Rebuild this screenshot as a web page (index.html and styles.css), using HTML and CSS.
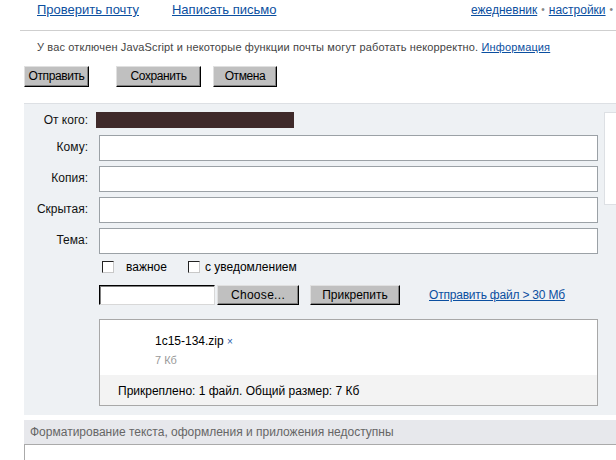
FILE: index.html
```html
<!DOCTYPE html>
<html>
<head>
<meta charset="utf-8">
<link rel="stylesheet" href="styles.css">
</head>
<body>
<div class="page">
  <div class="topnav">
    <div class="main-links">
      <a href="#">Проверить почту</a>
      <a href="#">Написать письмо</a>
    </div>
    <div class="side-links">
      <a href="#">ежедневник</a><span class="dot">•</span><a href="#">настройки</a><span class="dot">•</span><a href="#">помощь</a>
    </div>
  </div>
  <div class="notice">У вас отключен JavaScript и некоторые функции почты могут работать некорректно. <a href="#">Информация</a></div>
  <div class="actions">
    <span class="btn send">Отправить</span>
    <span class="btn save">Сохранить</span>
    <span class="btn cancel">Отмена</span>
  </div>
  <div class="compose">
    <div class="form">
      <div class="row from-row">
        <span class="label">От кого:</span>
        <span class="from-bar"></span>
      </div>
      <div class="row field-row"><span class="label">Кому:</span><span class="input"></span></div>
      <div class="row field-row"><span class="label">Копия:</span><span class="input"></span></div>
      <div class="row field-row"><span class="label">Скрытая:</span><span class="input"></span></div>
      <div class="row field-row"><span class="label">Тема:</span><span class="input"></span></div>
      <div class="checks">
        <span class="check"></span><span class="check-label">важное</span>
        <span class="check"></span><span class="check-label short">с уведомлением</span>
      </div>
      <div class="file-row">
        <span class="file-text"></span>
        <span class="btn choose">Choose...</span>
        <span class="btn attach">Прикрепить</span>
        <a href="#" class="big-file">Отправить файл &gt; 30 Мб</a>
      </div>
      <div class="attached">
        <div class="file-item">
          <div class="file-name">1c15-134.zip <span class="remove">×</span></div>
          <div class="file-size">7 Кб</div>
        </div>
        <div class="summary">Прикреплено: 1 файл. Общий размер: 7 Кб</div>
      </div>
    </div>
    <div class="sidebar"><div class="side-box"></div></div>
  </div>
  <div class="format-bar">Форматирование текста, оформления и приложения недоступны</div>
  <div class="editor"></div>
</div>
</body>
</html>
```
FILE: styles.css
```css
html, body {
  margin: 0;
  padding: 0;
  background: #fff;
  overflow: hidden;
}
body {
  width: 616px;
  height: 460px;
  font-family: "Liberation Sans", Arial, sans-serif;
  color: #000;
}
a {
  color: #0b4fa0;
  text-decoration: underline;
}
.page {
  width: 616px;
  overflow: hidden;
}
.topnav {
  margin-left: 20px;
  padding-left: 17px;
  height: 30px;
  border-bottom: 1px solid #cfcfcf;
  display: flex;
  font-size: 13px;
  line-height: 20px;
  overflow: hidden;
}
.main-links {
  display: flex;
  gap: 33px;
  width: 434px;
  flex-shrink: 0;
}
.side-links {
  display: flex;
  align-items: flex-start;
  font-size: 12px;
  white-space: nowrap;
}
.dot {
  color: #888;
  font-size: 10px;
  padding: 0 4px;
}
.notice {
  padding: 9px 0 0 37px;
  font-size: 11px;
  letter-spacing: 0.14px;
  line-height: 15px;
  color: #444;
  height: 26px;
}
.actions {
  margin-left: 24px;
  display: flex;
  height: 37px;
}
.btn {
  display: inline-block;
  box-sizing: border-box;
  height: 21px;
  padding: 0;
  text-align: center;
  background: #c0c0c0;
  border-top: 1px solid #e0e0e0;
  border-left: 1px solid #e0e0e0;
  border-right: 1px solid #000;
  border-bottom: 1px solid #000;
  box-shadow: inset -1px -1px 0 #808080;
  font-size: 12px;
  line-height: 19px;
  color: #000;
  white-space: nowrap;
}
.actions .btn {
  letter-spacing: -0.4px;
}
.send { width: 65px; }
.save { width: 85px; margin-left: 27px; }
.cancel { width: 64px; margin-left: 12px; }
.compose {
  margin-left: 24px;
  background: #eef1f4;
  border-top: 1px solid #dde0e4;
  display: flex;
  height: 311px;
}
.form {
  width: 574px;
  flex-shrink: 0;
  padding-top: 8px;
}
.row {
  display: flex;
  align-items: center;
}
.label {
  width: 64px;
  text-align: right;
  font-size: 12px;
  color: #111;
}
.field-row .label {
  padding-bottom: 3px;
}
.from-row {
  height: 16px;
  margin-bottom: 7px;
}
.from-bar {
  margin-left: 8px;
  width: 198px;
  height: 16px;
  background: #3f2a2a;
}
.field-row {
  height: 26px;
  margin-bottom: 5px;
}
.input {
  margin-left: 11px;
  box-sizing: border-box;
  width: 499px;
  height: 26px;
  background: #fff;
  border: 1px solid #9ba1a6;
}
.checks {
  display: flex;
  align-items: center;
  height: 14px;
  margin: 6px 0 0 78px;
  font-size: 12px;
}
.check {
  box-sizing: border-box;
  width: 12px;
  height: 12px;
  background: #fff;
  border-top: 1px solid #222;
  border-left: 1px solid #222;
  border-right: 1px solid #c8c8c8;
  border-bottom: 1px solid #c8c8c8;
}
.check-label {
  margin-left: 12px;
  margin-right: 21px;
}
.check-label.short { margin-left: 5px; }
.file-row {
  display: flex;
  align-items: center;
  margin: 11px 0 0 75px;
  height: 20px;
}
.file-text {
  box-sizing: border-box;
  width: 116px;
  height: 20px;
  background: #fff;
  border-top: 1px solid #000;
  border-left: 1px solid #000;
  border-right: 1px solid #d8d8d8;
  border-bottom: 1px solid #d8d8d8;
  box-shadow: inset 1px 1px 0 #808080;
}
.choose {
  margin-left: 2px;
  width: 82px;
  height: 20px;
  letter-spacing: 0.3px;
}
.attach {
  margin-left: 11px;
  width: 90px;
  height: 20px;
}
.big-file {
  margin-left: 29px;
  font-size: 12px;
  letter-spacing: -0.2px;
}
.attached {
  margin: 14px 0 0 75px;
  box-sizing: border-box;
  width: 499px;
  height: 87px;
  border: 1px solid #a8a8a8;
  background: #fff;
  display: flex;
  flex-direction: column;
}
.file-item {
  height: 55px;
  padding: 14px 0 0 55px;
  box-sizing: border-box;
}
.file-name {
  font-size: 12px;
  line-height: 14px;
}
.remove {
  color: #1d5aa8;
  font-size: 10px;
}
.file-size {
  font-size: 11px;
  color: #999;
  margin-top: 5px;
}
.summary {
  flex: 1;
  background: #f3f3f3;
  font-size: 12px;
  padding: 9px 0 0 18px;
}
.sidebar {
  padding: 8px 0 0 6px;
}
.side-box {
  width: 120px;
  height: 91px;
  background: #fff;
  border: 1px solid #dde0e4;
}
.format-bar {
  margin: 5px 0 0 24px;
  height: 25px;
  box-sizing: border-box;
  background: #e7e8ec;
  border-bottom: 1px solid #aaa;
  font-size: 12px;
  color: #666;
  line-height: 24px;
  padding-left: 6px;
}
.editor {
  margin-left: 24px;
  height: 40px;
  border-left: 1px solid #aaa;
}
```
